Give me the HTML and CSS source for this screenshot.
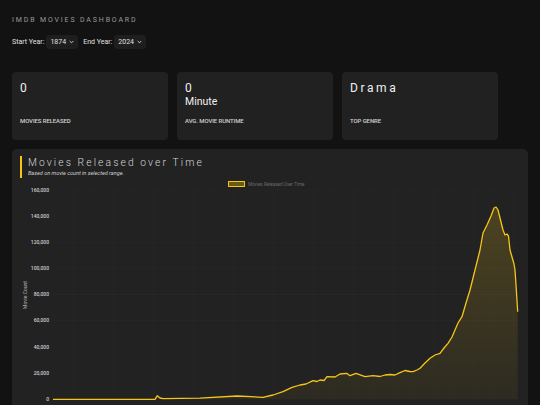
FILE: index.html
```html
<!DOCTYPE html>
<html>
<head>
<meta charset="utf-8">
<link rel="stylesheet" href="styles.css">
</head>
<body>
<div class="page">
  <h1 class="title">IMDB MOVIES DASHBOARD</h1>
  <div class="filters">
    <span class="lbl">Start Year:</span>
    <div class="select"><span>1874</span><svg width="5" height="4" viewBox="0 0 5 4"><path d="M0.7 1 L2.5 2.8 L4.3 1" fill="none" stroke="#ddd" stroke-width="0.9"/></svg></div>
    <span class="lbl">End Year:</span>
    <div class="select"><span>2024</span><svg width="5" height="4" viewBox="0 0 5 4"><path d="M0.7 1 L2.5 2.8 L4.3 1" fill="none" stroke="#ddd" stroke-width="0.9"/></svg></div>
  </div>
  <div class="cards">
    <div class="card">
      <div class="val">0</div>
      <div class="cap">MOVIES RELEASED</div>
    </div>
    <div class="card">
      <div class="val">0</div>
      <div class="unit">Minute</div>
      <div class="cap">AVG. MOVIE RUNTIME</div>
    </div>
    <div class="card">
      <div class="val spaced">Drama</div>
      <div class="cap">TOP GENRE</div>
    </div>
  </div>
  <div class="chart-card">
    <div class="chart-head">
      <div class="chart-title">Movies Released over Time</div>
      <div class="chart-sub">Based on movie count in selected range.</div>
    </div>
    <svg class="chart" width="516" height="240" viewBox="12 180 516 240">
      <defs>
        <linearGradient id="fillg" x1="0" y1="0" x2="0" y2="1" gradientUnits="objectBoundingBox">
          <stop offset="0" stop-color="#f5c518" stop-opacity="0.2"/>
          <stop offset="1" stop-color="#f5c518" stop-opacity="0.05"/>
        </linearGradient>
      </defs>
      <g class="grid">
        <line x1="53" y1="190" x2="518" y2="190"/>
        <line x1="53" y1="216.1" x2="518" y2="216.1"/>
        <line x1="53" y1="242.3" x2="518" y2="242.3"/>
        <line x1="53" y1="268.4" x2="518" y2="268.4"/>
        <line x1="53" y1="294.5" x2="518" y2="294.5"/>
        <line x1="53" y1="320.6" x2="518" y2="320.6"/>
        <line x1="53" y1="346.8" x2="518" y2="346.8"/>
        <line x1="53" y1="372.9" x2="518" y2="372.9"/>
        <line x1="53" y1="190" x2="53" y2="399"/>
        <line x1="73" y1="190" x2="73" y2="399"/>
        <line x1="93" y1="190" x2="93" y2="399"/>
        <line x1="113" y1="190" x2="113" y2="399"/>
        <line x1="133" y1="190" x2="133" y2="399"/>
        <line x1="153" y1="190" x2="153" y2="399"/>
        <line x1="173" y1="190" x2="173" y2="399"/>
        <line x1="193" y1="190" x2="193" y2="399"/>
        <line x1="213" y1="190" x2="213" y2="399"/>
        <line x1="233" y1="190" x2="233" y2="399"/>
        <line x1="253" y1="190" x2="253" y2="399"/>
        <line x1="273" y1="190" x2="273" y2="399"/>
        <line x1="293" y1="190" x2="293" y2="399"/>
        <line x1="313" y1="190" x2="313" y2="399"/>
        <line x1="333" y1="190" x2="333" y2="399"/>
        <line x1="353" y1="190" x2="353" y2="399"/>
        <line x1="373" y1="190" x2="373" y2="399"/>
        <line x1="393" y1="190" x2="393" y2="399"/>
        <line x1="413" y1="190" x2="413" y2="399"/>
        <line x1="433" y1="190" x2="433" y2="399"/>
        <line x1="453" y1="190" x2="453" y2="399"/>
        <line x1="473" y1="190" x2="473" y2="399"/>
        <line x1="493" y1="190" x2="493" y2="399"/>
        <line x1="513" y1="190" x2="513" y2="399"/>
      </g>
      <g class="ylab">
        <text x="49" y="191.8">160,000</text>
        <text x="49" y="217.9">140,000</text>
        <text x="49" y="244.1">120,000</text>
        <text x="49" y="270.2">100,000</text>
        <text x="49" y="296.3">80,000</text>
        <text x="49" y="322.4">60,000</text>
        <text x="49" y="348.6">40,000</text>
        <text x="49" y="374.7">20,000</text>
        <text x="49" y="400.8">0</text>
      </g>
      <text class="ytitle" transform="translate(27 295) rotate(-90)">Movie Count</text>
      <rect class="legend-box" x="228.5" y="181.5" width="16" height="5"/>
      <text class="legend-txt" x="248" y="186">Movies Released Over Time</text>
      <path class="area" d="M53 399.3 L155 399.3 L157.3 395.7 L160 398 L163 398.6 L200 398.2 L237 396 L263 397.3 L273 395 L283 391.7 L292 387.3 L300 385 L306 384 L313 380.7 L317 381.5 L320 380 L324 380.5 L327 376.7 L335 377 L340 374 L346.7 373.3 L350 375.7 L356 373.3 L365 376.7 L373 375.7 L380 376.5 L385 375 L390 374.5 L395 375 L400 372.7 L405 370.5 L410 371.5 L413 371.7 L417 370 L420 368.3 L425 363 L430 358.3 L435 355 L440 353.3 L444 348 L448 343.3 L452 337 L455 330 L458 323 L462 316.7 L466 303 L470 290 L475 270 L480 250 L483 233 L487 225 L491 216 L494 208 L496 207 L498 210 L500 218 L503 230 L505 235 L507 234 L508.5 236 L510 250 L512 257 L514 264 L515 270 L516 285 L517.7 311.7 L517.7 399.3 Z"/>
      <path class="line" d="M53 399.3 L155 399.3 L157.3 395.7 L160 398 L163 398.6 L200 398.2 L237 396 L263 397.3 L273 395 L283 391.7 L292 387.3 L300 385 L306 384 L313 380.7 L317 381.5 L320 380 L324 380.5 L327 376.7 L335 377 L340 374 L346.7 373.3 L350 375.7 L356 373.3 L365 376.7 L373 375.7 L380 376.5 L385 375 L390 374.5 L395 375 L400 372.7 L405 370.5 L410 371.5 L413 371.7 L417 370 L420 368.3 L425 363 L430 358.3 L435 355 L440 353.3 L444 348 L448 343.3 L452 337 L455 330 L458 323 L462 316.7 L466 303 L470 290 L475 270 L480 250 L483 233 L487 225 L491 216 L494 208 L496 207 L498 210 L500 218 L503 230 L505 235 L507 234 L508.5 236 L510 250 L512 257 L514 264 L515 270 L516 285 L517.7 311.7"/>
    </svg>
  </div>
</div>
</body>
</html>
```

FILE: styles.css
```css
* { box-sizing: border-box; }
html, body { margin: 0; padding: 0; }
body {
  background: #121212;
  color: #e6e6e6;
  font-family: Roboto, "Liberation Sans", sans-serif;
  overflow: hidden;
}
.page {
  padding: 16px 12px 0 12px;
}
.title {
  margin: 0;
  font-size: 7px;
  font-weight: 400;
  letter-spacing: 1.85px;
  color: #9a9a9a;
  line-height: 9px;
}
.filters {
  display: flex;
  align-items: center;
  gap: 2px;
  margin-top: 10px;
  height: 14px;
}
.lbl {
  font-size: 7px;
  color: #e0e0e0;
}
.select {
  display: flex;
  align-items: center;
  gap: 3px;
  height: 14px;
  padding: 0 4px 0 4px;
  background: #1e1e1e;
  border-radius: 3px;
  font-size: 7px;
  color: #e0e0e0;
  margin-right: 3px;
}
.cards {
  display: flex;
  gap: 9px;
  margin-top: 23px;
}
.card {
  width: 156px;
  height: 68px;
  background: #212121;
  border-radius: 4px;
  padding: 9px 8px 0 8px;
  display: flex;
  flex-direction: column;
  position: relative;
}
.val {
  font-size: 12px;
  line-height: 14px;
  color: #f0f0f0;
}
.val.spaced {
  letter-spacing: 2.6px;
}
.unit {
  font-size: 10.5px;
  line-height: 14px;
  color: #f0f0f0;
}
.cap {
  position: absolute;
  left: 8px;
  top: 45px;
  font-size: 6px;
  font-weight: 500;
  color: #d0d0d0;
  letter-spacing: -0.1px;
}
.chart-card {
  margin-top: 9px;
  width: 516px;
  height: 270px;
  background: #222222;
  border-radius: 5px;
  padding-top: 7px;
}
.chart-head {
  margin-left: 8px;
  border-left: 2px solid #f5c518;
  padding-left: 6px;
  height: 22px;
}
.chart-title {
  font-size: 10.3px;
  line-height: 13px;
  font-weight: 300;
  letter-spacing: 2.1px;
  color: #d6d6d6;
}
.chart-sub {
  font-size: 5.5px;
  line-height: 9px;
  font-style: italic;
  color: #d0d0d0;
}
.chart {
  display: block;
  margin-top: 2px;
}
.grid line {
  stroke: rgba(255, 255, 255, 0.035);
  stroke-width: 0.6;
}
.ylab text {
  font-size: 5px;
  font-weight: 500;
  fill: #cfcfcf;
  text-anchor: end;
  font-family: Roboto, "Liberation Sans", sans-serif;
}
.ytitle {
  font-size: 5px;
  fill: #bdbdbd;
  text-anchor: middle;
  font-family: Roboto, "Liberation Sans", sans-serif;
}
.legend-box {
  fill: #6b5a14;
  stroke: #f5c518;
  stroke-width: 1;
}
.legend-txt {
  font-size: 4.6px;
  fill: #6a6a6a;
  font-family: Roboto, "Liberation Sans", sans-serif;
}
.area {
  fill: url(#fillg);
  stroke: none;
}
.line {
  fill: none;
  stroke: #f5c518;
  stroke-width: 1.3;
  stroke-linejoin: round;
}
```
